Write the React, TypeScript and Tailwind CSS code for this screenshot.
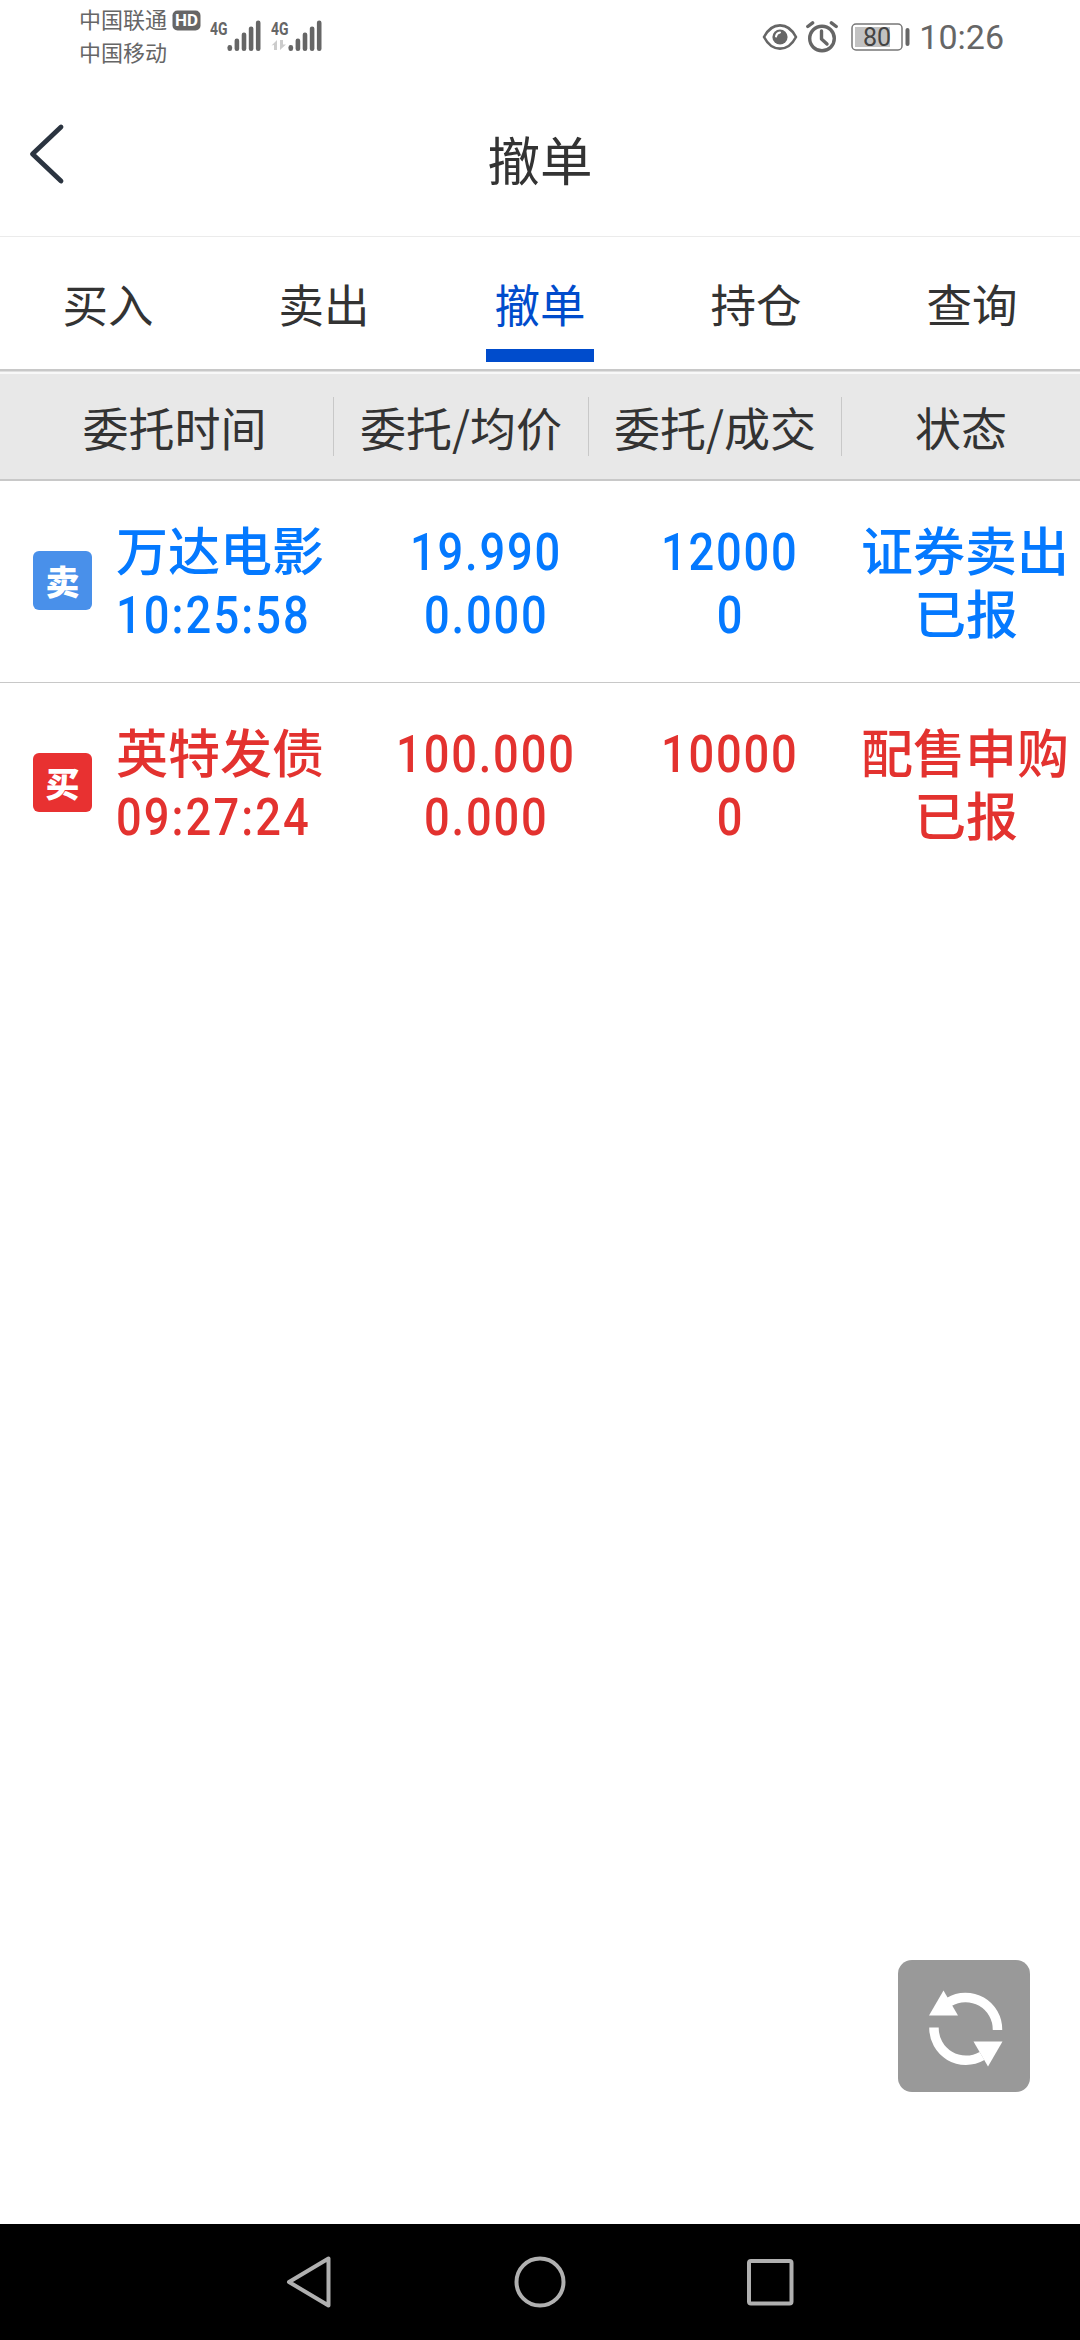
import React from "react";

const CJK = "font-['Noto_Sans_CJK_SC',sans-serif]";

function Signal({ data }: { data?: boolean }) {
  return (
    <svg width="52" height="34" viewBox="0 0 52 34" fill="#666">
      <text x="0" y="14.500" fontFamily="Roboto, sans-serif" fontWeight="700" fontSize="19" textLength="17.500" lengthAdjust="spacingAndGlyphs">
        4G
      </text>
      {data && (
        <g fill="#ccc">
          <path d="M0.500 25.500 6 20v10H3v-5zM9 20v10l6-5.500h-3V20z" />
        </g>
      )}
      <rect x="17.500" y="25" width="4.600" height="6" rx="2.200" />
      <rect x="24.600" y="18.500" width="4.600" height="12.500" rx="2.200" />
      <rect x="31.700" y="12.500" width="4.600" height="18.500" rx="2.200" />
      <rect x="38.800" y="6.500" width="4.600" height="24.500" rx="2.200" />
      <rect x="45.900" y="0.500" width="4.600" height="30.500" rx="2.200" />
    </svg>
  );
}

function StatusBar() {
  return (
    <div className="flex h-[80px] justify-between pl-[79px] pr-[76px] text-[#666]">
      <div className="flex">
        <div className={`flex flex-col pt-[2px] text-[22px] leading-[33px] ${CJK}`}>
          <span>中国联通</span>
          <span>中国移动</span>
        </div>
        <svg className="ml-[5px] mt-[10px]" width="29" height="21" viewBox="0 0 29 21">
          <rect x="0.500" y="0.500" width="28" height="20" rx="5" fill="#666" />
          <text x="3" y="16" fill="#fff" fontFamily="Roboto, sans-serif" fontWeight="700" fontSize="16" textLength="23" lengthAdjust="spacingAndGlyphs">
            HD
          </text>
        </svg>
        <div className="ml-[9px] mt-[20px] flex gap-[9px]">
          <Signal />
          <Signal data />
        </div>
      </div>
      <div className="flex h-[73px] items-center">
        <svg width="36" height="28" viewBox="0 0 36 28" fill="none" stroke="#666" strokeWidth="2.600">
          <path d="M2 14C10-1.500 26-1.500 34 14 26 29.500 10 29.500 2 14Z" strokeLinejoin="round" />
          <circle cx="18" cy="14" r="7.600" fill="#666" stroke="none" />
          <path d="M14 13.500q.5-3.500 4-4" stroke="#fff" strokeWidth="2" strokeLinecap="round" />
        </svg>
        <svg className="ml-[8px]" width="32" height="32" viewBox="0 0 32 32" fill="none" stroke="#666" strokeWidth="3.400">
          <circle cx="16" cy="17.500" r="12.300" />
          <path d="M15.500 10v8l5.500 5" strokeLinecap="round" strokeLinejoin="round" />
          <path d="M1.800 5.500 6.600 1.800M30.200 5.500 25.400 1.800" strokeLinecap="round" />
        </svg>
        <svg className="ml-[13px]" width="60" height="28" viewBox="0 0 60 28">
          <rect x="1" y="1" width="50" height="26" rx="4" fill="none" stroke="#777" strokeWidth="1.500" />
          <rect x="4" y="4" width="35" height="20" fill="#c2c2c2" />
          <rect x="54.500" y="5" width="4" height="18" rx="2" fill="#666" />
          <text x="26" y="22.500" textAnchor="middle" fill="#444" fontFamily="Roboto, sans-serif" fontSize="25">
            80
          </text>
        </svg>
        <span className="ml-[8px] font-['Roboto',sans-serif] text-[34px] leading-[40px]">10:26</span>
      </div>
    </div>
  );
}

const tabs = ["买入", "卖出", "撤单", "持仓", "查询"];

type Order = {
  side: string;
  badge: string;
  color: string;
  name: string;
  time: string;
  price: string;
  avg: string;
  qty: string;
  done: string;
  action: string;
  state: string;
};

const orders: Order[] = [
  { side: "卖", badge: "bg-[#4990ea]", color: "text-[#0479ff]", name: "万达电影", time: "10:25:58", price: "19.990", avg: "0.000", qty: "12000", done: "0", action: "证券卖出", state: "已报" },
  { side: "买", badge: "bg-[#e83131]", color: "text-[#e3322f]", name: "英特发债", time: "09:27:24", price: "100.000", avg: "0.000", qty: "10000", done: "0", action: "配售申购", state: "已报" },
];

function Num({ children, left }: { children: string; left?: boolean }) {
  return (
    <span
      className={`inline-block h-[63px] scale-x-[0.87] pt-[2px] font-['Roboto',sans-serif] text-[52px] font-medium leading-[63px] ${left ? "origin-left tracking-[2.400px]" : "origin-center pl-[5px] tracking-[2.100px]"}`}
    >
      {children}
    </span>
  );
}

function OrderRow({ o }: { o: Order }) {
  return (
    <div className={`flex h-[202px] border-b border-transparent pt-[38px] text-[52px] font-medium leading-[63px] first:border-[#c8c8c8] ${CJK} ${o.color}`}>
      <div className={`ml-[33px] mt-[32px] flex size-[59px] shrink-0 items-center justify-center rounded-[6px] text-[34px] font-black leading-none text-white ${o.badge}`}>
        {o.side}
      </div>
      <div className="ml-[24px] flex w-[240px] flex-col items-start whitespace-nowrap">
        <span className="-mt-[2px] mb-[2px]">{o.name}</span>
        <Num left>{o.time}</Num>
      </div>
      <div className="flex w-[256px] flex-col items-center">
        <Num>{o.price}</Num>
        <Num>{o.avg}</Num>
      </div>
      <div className="flex w-[232px] flex-col items-center">
        <Num>{o.qty}</Num>
        <Num>{o.done}</Num>
      </div>
      <div className="-mt-[2px] flex w-[236px] flex-col items-center whitespace-nowrap pl-[6px]">
        <span>{o.action}</span>
        <span className="pl-[2px]">{o.state}</span>
      </div>
    </div>
  );
}

export default function App() {
  return (
    <div className={`flex h-[2340px] w-[1080px] flex-col overflow-hidden bg-white text-[#333] ${CJK}`}>
      <StatusBar />
      <header className="grid h-[157px] grid-cols-[1fr_auto_1fr] items-center border-b border-[#ebebeb]">
        <svg className="mb-[9px] ml-[28px]" width="38" height="62" viewBox="0 0 38 62" fill="none" stroke="#2b3440" strokeWidth="4.800" strokeLinecap="round" strokeLinejoin="round">
          <path d="M33 4 4.500 31 33 58" />
        </svg>
        <h1 className="text-[52.500px] leading-[60px]">撤单</h1>
      </header>
      <nav className="grid h-[132px] grid-cols-5">
        {tabs.map((t) => (
          <div key={t} className={`flex flex-col items-center pt-[36px] text-[45.500px] leading-[60px] ${t === "撤单" ? "text-[#004ccc]" : ""}`}>
            <span>{t}</span>
            {t === "撤单" && <i className="mt-[16px] h-[13px] w-[108px] bg-[#004ccc]" />}
          </div>
        ))}
      </nav>
      <div className="h-[3px] border-b border-[#e0e0e0] bg-[#c8c8c8]" />
      <div className="flex h-[109px] items-center whitespace-nowrap border-b-2 border-t-2 border-b-[#c8c8c8] border-t-[#f8f8f8] bg-[#e8e8e8] pb-[1px] text-[46px] leading-[60px]">
        <div className="flex h-[59px] w-[334px] items-center justify-center border-r border-[#c8c8c8] pl-[16px]">委托时间</div>
        <div className="flex h-[59px] w-[255px] items-center justify-center border-r border-[#c8c8c8]">委托/均价</div>
        <div className="flex h-[59px] w-[253px] items-center justify-center border-r border-[#c8c8c8]">委托/成交</div>
        <div className="flex h-[59px] w-[238px] items-center justify-center">状态</div>
      </div>
      <main className="flex-1">
        {orders.map((o) => (
          <OrderRow key={o.name} o={o} />
        ))}
      </main>
      <button className="mb-[132px] mr-[50px] flex size-[132px] items-center justify-center self-end rounded-[14px] bg-[#999]">
        <svg width="132" height="132" viewBox="0 0 132 132" fill="none" stroke="#fff" strokeWidth="9.500">
          <path d="M99.500 70A32 32 0 0 0 51 42" />
          <path d="M36 67.500A32 32 0 0 0 84 96" />
          <path d="M45.500 30.500 60 55.500H31Z" fill="#fff" stroke="none" />
          <path d="M90 106.500 75.500 81.500H104.500Z" fill="#fff" stroke="none" />
        </svg>
      </button>
      <footer className="h-[116px] shrink-0 bg-black">
        <div className="flex h-full items-center justify-center gap-[174px]">
          <svg width="56" height="56" viewBox="0 0 56 56" fill="none" stroke="#b0b0b0" strokeWidth="4" strokeLinejoin="round">
            <path d="M46.500 4.500v47L7 28Z" />
          </svg>
          <svg width="56" height="56" viewBox="0 0 56 56" fill="none" stroke="#b0b0b0" strokeWidth="4">
            <circle cx="28" cy="28" r="23.500" />
          </svg>
          <svg width="56" height="56" viewBox="0 0 56 56" fill="none" stroke="#b0b0b0" strokeWidth="4">
            <rect x="7" y="7" width="42.500" height="42.500" rx="2" />
          </svg>
        </div>
      </footer>
    </div>
  );
}
